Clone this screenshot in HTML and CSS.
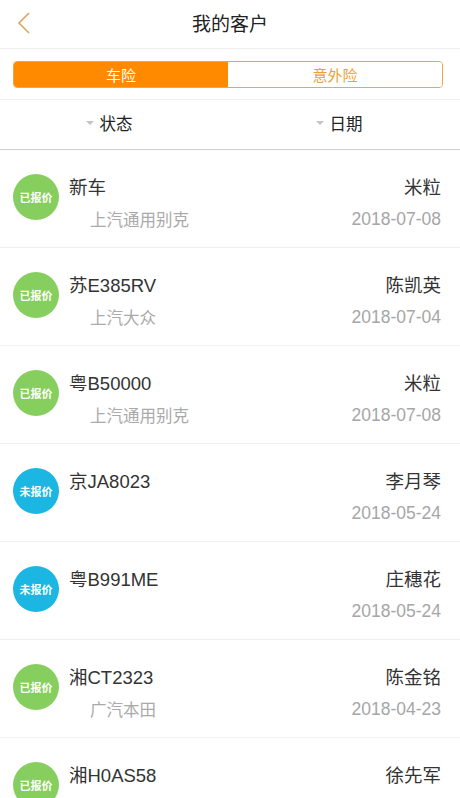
FILE: index.html
```html
<!DOCTYPE html>
<html lang="zh-CN">

<head>
	<meta charset="UTF-8">
	<meta name="viewport" content="width=device-width, initial-scale=1.0">
	<title>我的客户</title>
	<link rel="stylesheet" href="styles.css">
</head>

<body>
	<div class="nav">
		<svg class="back" width="16" height="24" viewBox="0 0 16 24">
			<polyline points="13,2 3,12 13,22" fill="none" stroke="#dba25c" stroke-width="1.5" />
		</svg>
		<h1>我的客户</h1>
	</div>

	<div class="tabs-wrap">
		<div class="tabs">
			<div class="tab active">车险</div>
			<div class="tab">意外险</div>
		</div>
	</div>

	<div class="filter">
		<div class="filter-item"><span class="caret"></span>状态</div>
		<div class="filter-item"><span class="caret"></span>日期</div>
	</div>

	<ul class="list">
		<li class="item">
			<span class="badge done">已报价</span>
			<div class="info">
				<div class="row"><span class="plate">新车</span><span class="name">米粒</span></div>
				<div class="row"><span class="brand">上汽通用别克</span><span class="date">2018-07-08</span></div>
			</div>
		</li>
		<li class="item">
			<span class="badge done">已报价</span>
			<div class="info">
				<div class="row"><span class="plate">苏E385RV</span><span class="name">陈凯英</span></div>
				<div class="row"><span class="brand">上汽大众</span><span class="date">2018-07-04</span></div>
			</div>
		</li>
		<li class="item">
			<span class="badge done">已报价</span>
			<div class="info">
				<div class="row"><span class="plate">粤B50000</span><span class="name">米粒</span></div>
				<div class="row"><span class="brand">上汽通用别克</span><span class="date">2018-07-08</span></div>
			</div>
		</li>
		<li class="item">
			<span class="badge todo">未报价</span>
			<div class="info">
				<div class="row"><span class="plate">京JA8023</span><span class="name">李月琴</span></div>
				<div class="row"><span class="brand"></span><span class="date">2018-05-24</span></div>
			</div>
		</li>
		<li class="item">
			<span class="badge todo">未报价</span>
			<div class="info">
				<div class="row"><span class="plate">粤B991ME</span><span class="name">庄穗花</span></div>
				<div class="row"><span class="brand"></span><span class="date">2018-05-24</span></div>
			</div>
		</li>
		<li class="item">
			<span class="badge done">已报价</span>
			<div class="info">
				<div class="row"><span class="plate">湘CT2323</span><span class="name">陈金铭</span></div>
				<div class="row"><span class="brand">广汽本田</span><span class="date">2018-04-23</span></div>
			</div>
		</li>
		<li class="item">
			<span class="badge done">已报价</span>
			<div class="info">
				<div class="row"><span class="plate">湘H0AS58</span><span class="name">徐先军</span></div>
				<div class="row"><span class="brand"></span><span class="date"></span></div>
			</div>
		</li>
	</ul>
</body>

</html>
```

FILE: styles.css
```css
/* Base reset */
* {
	margin: 0;
	padding: 0;
	box-sizing: border-box;
	font-family: 'Liberation Sans', 'Noto Sans CJK SC', sans-serif;
}

body {
	background: #fff;
	color: #333;
	overflow: hidden;
}

.nav {
	position: relative;
	height: 49px;
	display: flex;
	align-items: center;
	justify-content: center;
	border-bottom: 1px solid #f0f0f0;
}

.nav h1 {
	font-size: 19px;
	font-weight: normal;
	color: #222;
	margin-top: -3px;
}

.back {
	position: absolute;
	left: 16px;
	top: 11px;
}

.tabs-wrap {
	padding: 12px 17px 11px 13px;
	border-bottom: 1px solid #f0f0f0;
}

.tabs {
	display: flex;
	height: 27px;
	border: 1px solid #f0a643;
	border-radius: 4px;
	overflow: hidden;
}

.tab {
	flex: 1;
	display: flex;
	align-items: center;
	justify-content: center;
	font-size: 15px;
	color: #e9a13a;
	background: #fff;
}

.tab.active {
	background: #ff8a00;
	color: #fff;
}

.filter {
	display: flex;
	height: 50px;
	padding-bottom: 4px;
	border-bottom: 1px solid #cfcfcf;
}

.filter-item {
	flex: 1;
	display: flex;
	align-items: center;
	justify-content: center;
	font-size: 16.5px;
	color: #222;
	padding-right: 12px;
}

.caret {
	width: 0;
	height: 0;
	border-left: 4px solid transparent;
	border-right: 4px solid transparent;
	border-top: 4px solid #c4c4c4;
	margin-right: 6px;
}

.list {
	list-style: none;
}

.item {
	display: flex;
	align-items: flex-start;
	height: 98px;
	padding: 24px 19px 0 13px;
	border-bottom: 1px solid #f0f0f0;
}

.badge {
	flex: none;
	width: 46px;
	height: 46px;
	border-radius: 50%;
	display: flex;
	align-items: center;
	justify-content: center;
	color: #fff;
	font-size: 11px;
	font-weight: bold;
}

.badge.done {
	background: #86cf5e;
}

.badge.todo {
	background: #1cb6e2;
}

.info {
	flex: 1;
	margin-left: 10px;
}

.row {
	display: flex;
	justify-content: space-between;
	align-items: center;
	height: 24px;
}

.row + .row {
	margin-top: 9px;
}

.plate,
.name {
	font-size: 18.5px;
	color: #333;
}

.brand {
	font-size: 16.5px;
	color: #aaa;
	padding-left: 21px;
}

.date {
	font-size: 17.5px;
	color: #a6a6a6;
}
```
